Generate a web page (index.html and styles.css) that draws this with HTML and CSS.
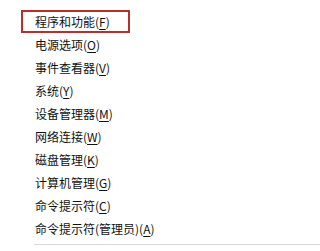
FILE: index.html
```html
<!DOCTYPE html>
<html lang="zh-CN">
<head>
<meta charset="utf-8">
<link rel="stylesheet" href="styles.css">
</head>
<body>
<ul class="menu">
  <li class="item hl">程序和功能(<u>F</u>)</li>
  <li class="item">电源选项(<u>O</u>)</li>
  <li class="item">事件查看器(<u>V</u>)</li>
  <li class="item">系统(<u>Y</u>)</li>
  <li class="item">设备管理器(<u>M</u>)</li>
  <li class="item">网络连接(<u>W</u>)</li>
  <li class="item">磁盘管理(<u>K</u>)</li>
  <li class="item">计算机管理(<u>G</u>)</li>
  <li class="item">命令提示符(<u>C</u>)</li>
  <li class="item">命令提示符(管理员)(<u>A</u>)</li>
  <li class="sep"></li>
</ul>
</body>
</html>
```
FILE: styles.css
```css
html, body {
  margin: 0;
  padding: 0;
  background: #ffffff;
}
.menu {
  list-style: none;
  margin: 0;
  padding: 10px 0 0 0;
  font-family: "Noto Sans CJK SC", "Microsoft YaHei", sans-serif;
  font-size: 12px;
  color: #111111;
}
.item {
  height: 23px;
  line-height: 24px;
  padding-left: 35px;
  box-sizing: border-box;
  white-space: nowrap;
}
.item u {
  text-decoration-thickness: 1px;
  text-underline-offset: 2px;
}
.hl {
  margin-left: 21px;
  width: 109px;
  padding-left: 12px;
  border: 2px solid #b8302e;
  line-height: 20px;
}
.sep {
  margin: 4px 0 0 34px;
  height: 1px;
  background: #d9d9d9;
}
```
